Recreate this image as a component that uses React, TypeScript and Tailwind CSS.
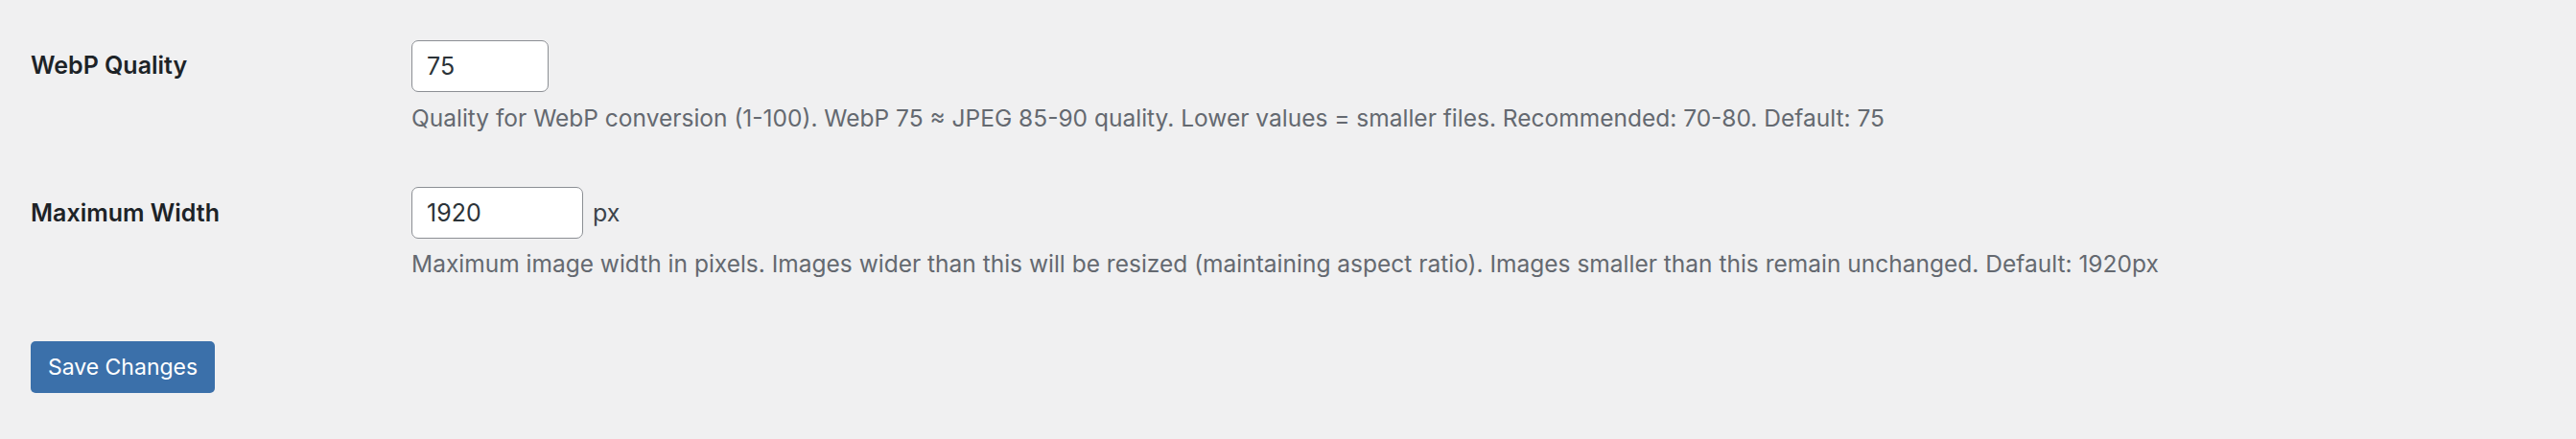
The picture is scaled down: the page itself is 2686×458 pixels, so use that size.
import React from "react";

export default function App() {
  return (
    <div
      className="w-[2686px] h-[458px] bg-[#f0f0f1] pl-[32px] pt-[42px]"
      style={{ fontFamily: 'Inter, "Noto Sans", sans-serif' }}
    >
      <div className="flex items-start">
        <div className="w-[397px] pt-[8px] text-[25px] leading-[36px] font-semibold text-[#1d2327]">
          WebP Quality
        </div>
        <div className="flex flex-col">
          <input
            defaultValue="75"
            className="w-[143px] h-[54px] rounded-[7px] border-[1.5px] border-[#8c8f94] bg-white px-[15px] text-[25px] text-[#2c3338] outline-none"
          />
          <p className="mt-[9px] text-[24.5px] leading-[36px] text-[#646970] whitespace-nowrap">
            Quality for WebP conversion (1-100). WebP 75 ≈ JPEG 85-90 quality. Lower values = smaller files. Recommended: 70-80. Default: 75
          </p>
        </div>
      </div>
      <div className="flex items-start mt-[54px]">
        <div className="w-[397px] pt-[9px] text-[25px] leading-[36px] font-semibold text-[#1d2327]">
          Maximum Width
        </div>
        <div className="flex flex-col">
          <div className="flex items-center gap-[10px]">
            <input
              defaultValue="1920"
              className="w-[179px] h-[54px] rounded-[7px] border-[1.5px] border-[#8c8f94] bg-white px-[15px] text-[25px] text-[#2c3338] outline-none"
            />
            <span className="text-[25px] leading-[36px] text-[#3c434a]">px</span>
          </div>
          <p className="mt-[8px] text-[24.5px] leading-[36px] text-[#646970] whitespace-nowrap">
            Maximum image width in pixels. Images wider than this will be resized (maintaining aspect ratio). Images smaller than this remain unchanged. Default: 1920px
          </p>
        </div>
      </div>
      <button className="mt-[63px] w-[192px] h-[54px] rounded-[5px] bg-[#3b70aa] text-white text-[23px] leading-none">
        Save Changes
      </button>
    </div>
  );
}
